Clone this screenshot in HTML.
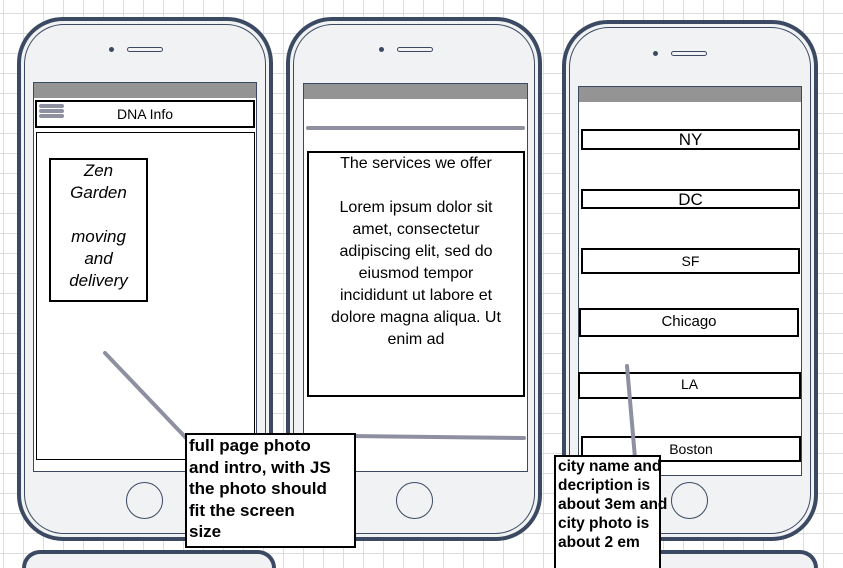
<!DOCTYPE html><html><head><style>
html,body{margin:0;width:843px;height:568px;overflow:hidden}
body{position:relative;font-family:"Liberation Sans",Arial,sans-serif;
background-color:#fff;background-image:linear-gradient(#ddd 1px,transparent 1px),linear-gradient(90deg,#ddd 1px,transparent 1px);background-size:20px 20px;background-position:3px 13px}
#w{position:absolute;left:0;top:0;width:843px;height:568px;overflow:hidden}
div{position:absolute;box-sizing:border-box}
.ph{border:4px solid #3b4a62;border-radius:46px;background:#f1f2f4}
.ph:after{content:"";position:absolute;left:3px;top:3px;right:3px;bottom:3px;border:1px solid #3b4a62;border-radius:40px}
.pb{border:4px solid #3b4a62;border-bottom:none;border-radius:46px 46px 0 0;background:#f1f2f4}
.scr{background:#fff;border:1px solid #3b4a62}
.bar{background:#949494;height:15px}
.bx{border:2px solid #000;background:#fff;text-align:center}
.dot{width:5px;height:5px;border-radius:50%;background:#3b4a62}
.slot{width:36px;height:5px;border:1px solid #3b4a62;border-radius:3px}
.btn{width:37px;height:37px;border:1px solid #3b4a62;border-radius:50%}
.note{border:2px solid #000;border-bottom:none;background:#fff;font-weight:bold;font-size:17px;line-height:21.5px;padding:0 2px;white-space:nowrap}
</style></head><body><div id="w">
<div class="ph" style="left:17px;top:17px;width:256px;height:524px"></div>
<div class="ph" style="left:286px;top:17px;width:256px;height:524px"></div>
<div class="ph" style="left:562px;top:20px;width:256px;height:521px"></div>
<div class="pb" style="left:22px;top:550px;width:254px;height:18px"></div>
<div class="pb" style="left:562px;top:550px;width:256px;height:18px"></div>

<div class="dot" style="left:109px;top:47px"></div><div class="slot" style="left:127px;top:47px"></div>
<div class="dot" style="left:379px;top:47px"></div><div class="slot" style="left:397px;top:47px"></div>
<div class="dot" style="left:653px;top:51px"></div><div class="slot" style="left:671px;top:51px"></div>
<div class="btn" style="left:126px;top:482px"></div>
<div class="btn" style="left:396px;top:482px"></div>
<div class="btn" style="left:671px;top:482px"></div>

<div class="scr" style="left:33px;top:82px;width:224px;height:390px"></div>
<div class="bar" style="left:34px;top:83px;width:222px"></div>
<div class="bx" style="left:35px;top:100px;width:220px;height:28px;font-size:14px;line-height:24px">DNA Info</div>
<div style="left:39px;top:104px;width:25px;height:4px;background:#8e90a2;border-radius:2px"></div>
<div style="left:39px;top:109px;width:25px;height:4px;background:#8e90a2;border-radius:2px"></div>
<div style="left:39px;top:114px;width:25px;height:4px;background:#8e90a2;border-radius:2px"></div>
<div style="left:36px;top:132px;width:219px;height:328px;border:1px solid #000"></div>
<div class="bx" style="left:49px;top:158px;width:99px;height:144px;font-style:italic;font-size:17px;line-height:22px">Zen<br>Garden<br><br>moving<br>and<br>delivery</div>

<div class="scr" style="left:303px;top:83px;width:225px;height:389px"></div>
<div class="bar" style="left:304px;top:84px;width:223px"></div>
<div style="left:306px;top:126px;width:219px;height:4px;background:#8e90a2;border-radius:2px"></div>
<div class="bx" style="left:307px;top:151px;width:218px;height:246px;font-size:16px;line-height:22px;padding:0 14px">The services we offer<br><br>Lorem ipsum dolor sit amet, consectetur adipiscing elit, sed do eiusmod tempor incididunt ut labore et dolore magna aliqua. Ut enim ad</div>

<div class="scr" style="left:578px;top:86px;width:224px;height:390px"></div>
<div class="bar" style="left:579px;top:87px;width:222px"></div>
<div class="bx" style="left:581px;top:129px;width:219px;height:21px;font-size:17px;line-height:18px">NY</div>
<div class="bx" style="left:581px;top:189px;width:219px;height:20px;font-size:17px;line-height:17px">DC</div>
<div class="bx" style="left:581px;top:248px;width:219px;height:26px;font-size:14px;line-height:22px">SF</div>
<div class="bx" style="left:579px;top:308px;width:220px;height:29px;font-size:15px;line-height:24px">Chicago</div>
<div class="bx" style="left:578px;top:372px;width:223px;height:27px;font-size:14px;line-height:21px">LA</div>
<div class="bx" style="left:581px;top:436px;width:220px;height:26px;font-size:14px;line-height:22px">Boston</div>

<svg style="position:absolute;left:0;top:0" width="843" height="568"><g stroke="#8e90a2" stroke-width="4" stroke-linecap="round"><line x1="105" y1="353" x2="188" y2="440"/><line x1="350" y1="436" x2="524" y2="438"/><line x1="627" y1="366" x2="635" y2="458"/></g></svg>
<div class="note" style="left:185px;top:433px;width:171px;height:115px;border-bottom:2px solid #000">full page photo<br>and intro, with JS<br>the photo should<br>fit the screen<br>size</div>
<div class="note" style="left:554px;top:455px;width:107px;height:113px;line-height:19px;font-size:15.5px">city name and<br>decription is<br>about 3em and<br>city photo is<br>about 2 em</div>
</div></body></html>
